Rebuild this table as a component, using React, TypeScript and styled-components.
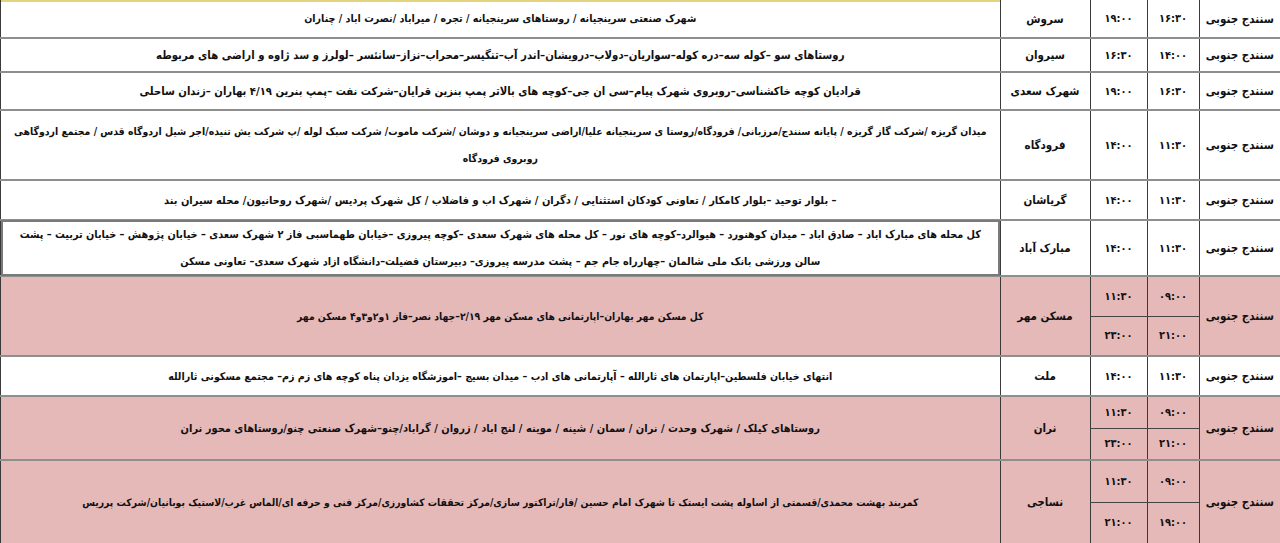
import React from "react";
import styled, { createGlobalStyle } from "styled-components";

const GlobalStyle = createGlobalStyle`
  html, body {
    margin: 0;
    padding: 0;
    background: #ffffff;
  }
  body {
    font-family: "DejaVu Sans Condensed", "DejaVu Sans", sans-serif;
    overflow: hidden;
  }
`;

interface Row {
  height: number;
  start: string[];
  end: string[];
  name: string;
  areas: string[];
  size?: number;
  pink?: boolean;
  boxed?: boolean;
}

const rows: Row[] = [
  {
    height: 38,
    start: ["۱۶:۳۰"],
    end: ["۱۹:۰۰"],
    name: "سروش",
    areas: [
      "شهرک صنعتی سرینجیانه / روستاهای سرینجیانه / تجره / میراباد /نصرت اباد / چناران",
    ],
    size: 10.6,
  },
  {
    height: 34,
    start: ["۱۴:۰۰"],
    end: ["۱۶:۳۰"],
    name: "سیروان",
    areas: [
      "روستاهای سو –کوله سه–دره کوله–سواریان–دولاب–درویشان–اندر آب–تنگیسر–محراب–نزاز–سانئسر –لولرز و سد ژاوه و اراضی های مربوطه",
    ],
    size: 11.3,
  },
  {
    height: 38,
    start: ["۱۶:۳۰"],
    end: ["۱۹:۰۰"],
    name: "شهرک سعدی",
    areas: [
      "قرادیان کوچه خاکشناسی–روبروی شهرک پیام–سی ان جی–کوچه های بالاتر پمپ بنزین قرایان–شرکت نفت –پمپ بنرین ۴/۱۹ بهاران –زندان ساحلی",
    ],
    size: 11.2,
  },
  {
    height: 70,
    start: ["۱۱:۳۰"],
    end: ["۱۴:۰۰"],
    name: "فرودگاه",
    areas: [
      "میدان گریزه /شرکت گاز گریزه / پایانه سنندج/مرزبانی/ فرودگاه/روستا ی سرینجیانه علیا/اراضی سرینجیانه و دوشان /شرکت ماموت/ شرکت سبک لوله /پ شرکت یش تنیده/اجر شیل اردوگاه قدس / مجتمع اردوگاهی",
      "روبروی فرودگاه",
    ],
    size: 10.4,
  },
  {
    height: 40,
    start: ["۱۱:۳۰"],
    end: ["۱۴:۰۰"],
    name: "گریاشان",
    areas: [
      "– بلوار توحید –بلوار کامکار / تعاونی کودکان استثنایی /  دگران / شهرک اب و فاضلاب /  کل شهرک پردیس /شهرک روحانیون/ محله سیران بند",
    ],
  },
  {
    height: 55,
    start: ["۱۱:۳۰"],
    end: ["۱۴:۰۰"],
    name: "مبارک آباد",
    areas: [
      "کل محله های مبارک اباد – صادق اباد – میدان کوهنورد  – هیوالرد–کوچه های نور – کل محله های شهرک سعدی  –کوچه پیروزی –خیابان طهماسبی فاز ۲ شهرک سعدی – خیابان پژوهش – خیابان تربیت – پشت",
      "سالن ورزشی بانک ملی شالمان –چهارراه جام جم – پشت مدرسه پیروزی– دبیرستان فضیلت–دانشگاه ازاد شهرک سعدی– تعاونی مسکن",
    ],
    size: 10.8,
    boxed: true,
  },
  {
    height: 80,
    start: ["۰۹:۰۰", "۲۱:۰۰"],
    end: ["۱۱:۳۰", "۲۳:۰۰"],
    name: "مسکن مهر",
    areas: [
      "کل مسکن مهر بهاران–اپارتمانی های مسکن مهر ۲/۱۹–جهاد نصر–فاز ۱و۲و۳و۴ مسکن مهر",
    ],
    size: 10.3,
    pink: true,
  },
  {
    height: 40,
    start: ["۱۱:۳۰"],
    end: ["۱۴:۰۰"],
    name: "ملت",
    areas: [
      "انتهای خیابان فلسطین–اپارتمان های ثارالله – آپارتمانی های ادب –  میدان بسیج –اموزشگاه یزدان پناه کوچه های زم زم– مجتمع مسکونی ثارالله",
    ],
    size: 10.6,
  },
  {
    height: 64,
    start: ["۰۹:۰۰", "۲۱:۰۰"],
    end: ["۱۱:۳۰", "۲۳:۰۰"],
    name: "نران",
    areas: [
      "روستاهای کیلک / شهرک وحدت / نران / سمان / شینه / موینه / لنج اباد / زروان / گراباد/چنو–شهرک صنعتی چنو/روستاهای محور نران",
    ],
    pink: true,
  },
  {
    height: 84,
    start: ["۰۹:۰۰", "۱۹:۰۰"],
    end: ["۱۱:۳۰", "۲۱:۰۰"],
    name: "نساجی",
    areas: [
      "کمربند بهشت محمدی/قسمتی از اساوله پشت ایستک تا شهرک امام حسین /فار/تراکتور سازی/مرکز تحققات کشاورزی/مرکز فنی و حرفه ای/الماس غرب/لاستیک بوبانیان/شرکت پرریس",
    ],
    size: 10.3,
    pink: true,
  },
];

const REGION = "سنندج جنوبی";

const AreaText = ({ lines }: { lines: string[] }) => (
  <>
    {lines.map((l, i) => (
      <AreaLine key={i}>{l}</AreaLine>
    ))}
  </>
);

export default function App() {
  return (
    <>
      <GlobalStyle />
      <Schedule dir="rtl">
        <colgroup>
          <col style={{ width: 81 }} />
          <col style={{ width: 52 }} />
          <col style={{ width: 57 }} />
          <col style={{ width: 90 }} />
          <col />
        </colgroup>
        <tbody>
          {rows.map((row, i) =>
            row.start.length === 1 ? (
              <Line key={i} $pink={row.pink} style={{ height: row.height }}>
                <Region>{REGION}</Region>
                <Time>{row.start[0]}</Time>
                <Time>{row.end[0]}</Time>
                <Name>{row.name}</Name>
                <Areas $size={row.size} $boxed={row.boxed} $first={i === 0}>
                  <AreaText lines={row.areas} />
                </Areas>
              </Line>
            ) : (
              <React.Fragment key={i}>
                <Line $pink={row.pink} style={{ height: row.height / 2 }}>
                  <Region rowSpan={2}>{REGION}</Region>
                  <Time $top>{row.start[0]}</Time>
                  <Time $top>{row.end[0]}</Time>
                  <Name rowSpan={2}>{row.name}</Name>
                  <Areas rowSpan={2} $size={row.size}>
                    <AreaText lines={row.areas} />
                  </Areas>
                </Line>
                <Line $pink={row.pink} style={{ height: row.height / 2 }}>
                  <Time>{row.start[1]}</Time>
                  <Time>{row.end[1]}</Time>
                </Line>
              </React.Fragment>
            )
          )}
        </tbody>
      </Schedule>
    </>
  );
}

const Schedule = styled.table`
  width: 1280px;
  table-layout: fixed;
  border-collapse: collapse;
  font-family: "DejaVu Sans Condensed", "DejaVu Sans", sans-serif;
  font-stretch: condensed;
  font-weight: bold;
  font-size: 11px;
  color: #111;
`;

const Line = styled.tr<{ $pink?: boolean }>`
  background: ${(p) => (p.$pink ? "#e6b9b9" : "#ffffff")};
`;

const Cell = styled.td`
  padding: 0;
  border-left: 1px solid #3a3a3a;
  border-bottom: 2px solid #8e8e8e;
  vertical-align: middle;
  text-align: center;
  white-space: nowrap;
  overflow: hidden;
`;

const Region = styled(Cell)`
  font-size: 11.5px;
`;

const Time = styled(Cell)<{ $top?: boolean }>`
  font-size: 11px;
  ${(p) => p.$top && "border-bottom: 1px solid #444;"}
`;

const Name = styled(Cell)`
  font-size: 11.5px;
`;

const Areas = styled.td<{ $size?: number; $boxed?: boolean; $first?: boolean }>`
  padding: 0 10px;
  font-size: ${(p) => p.$size ?? 11}px;
  text-align: center;
  vertical-align: middle;
  border-bottom: 2px solid #8e8e8e;
  border-left: 1px solid #3a3a3a;
  ${(p) => p.$boxed && "outline: 2px solid #7a7a7a; outline-offset: -2px;"}
  ${(p) => p.$first && "box-shadow: inset 0 2px 0 #e6d27c;"}
`;

const AreaLine = styled.div`
  line-height: 27px;
  white-space: nowrap;
`;
